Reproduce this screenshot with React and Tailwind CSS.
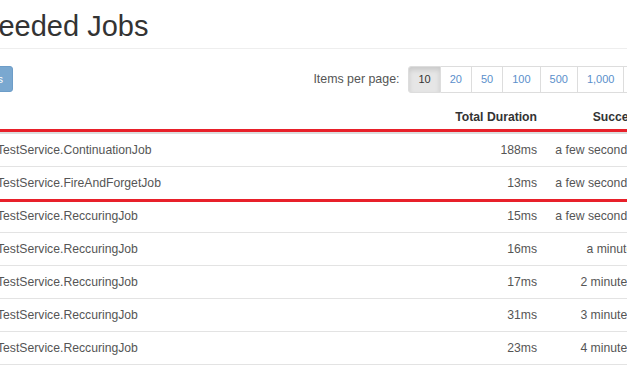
const rows = [
  { id: 101, job: "TestService.ContinuationJob", duration: "188ms", when: "a few seconds ago" },
  { id: 100, job: "TestService.FireAndForgetJob", duration: "13ms", when: "a few seconds ago" },
  { id: 99, job: "TestService.ReccuringJob", duration: "15ms", when: "a few seconds ago" },
  { id: 98, job: "TestService.ReccuringJob", duration: "16ms", when: "a minute ago" },
  { id: 97, job: "TestService.ReccuringJob", duration: "17ms", when: "2 minutes ago" },
  { id: 96, job: "TestService.ReccuringJob", duration: "31ms", when: "3 minutes ago" },
  { id: 95, job: "TestService.ReccuringJob", duration: "23ms", when: "4 minutes ago" },
];

const perPage = ["10", "20", "50", "100", "500", "1,000", "5,000"];

function Paginator() {
  return (
    <div className="flex h-[27px] text-[11px]">
      {perPage.map((n, i) => (
        <a
          key={n}
          href="#"
          className={
            "flex items-center px-[9px] border-y border-r border-[#ddd] " +
            (i === 0
              ? "border-l rounded-l-[3px] bg-[#e6e6e6] border-[#c4c4c4] text-[#333] shadow-[inset_0_3px_5px_rgba(0,0,0,0.125)]"
              : "bg-white text-[#5b8fcb]")
          }
        >
          {n}
        </a>
      ))}
    </div>
  );
}

export default function App() {
  return (
    <div className="relative w-[627px] h-[376px] overflow-hidden bg-white font-['Liberation_Sans',Arial,sans-serif]">
      <div className="-ml-[85px] w-[750px]">
        <h1 className="mt-[8px] pb-[4px] pl-[19px] border-b border-[#eee] text-[29px] leading-[36px] font-normal text-[#333]">
          Succeeded Jobs
        </h1>

        {/* toolbar */}
        <div className="mt-[17px] flex items-start justify-between">
          <button
            type="button"
            disabled
            className="flex items-center justify-end w-[98px] h-[26px] pr-[9px] rounded-[3px] bg-[#7aa8d0] border border-[#6d9dc8] text-white text-[11px]"
          >
            Requeue jobs
          </button>
          <div className="flex items-center gap-[9px] mr-[-6px]">
            <span className="text-[12.4px] text-[#555]">Items per page:</span>
            <Paginator />
          </div>
        </div>

        {/* table */}
        <div className="mt-[10px] text-[12.2px]">
          <div className="flex items-center h-[31px] border-b-2 border-[#ddd] font-bold text-[#333]">
            <div className="w-[82px]" />
            <div className="flex-1" />
            <div className="w-[100px] pr-2 text-right whitespace-nowrap">Total Duration</div>
            <div className="w-[120px] pr-2 text-right">Succeeded</div>
          </div>
          {rows.map((r) => (
            <div key={r.id} className="flex items-center h-[33px] border-b border-[#e3e3e3] text-[#555]">
              <div className="w-[82px]" />
              <div className="flex-1 whitespace-nowrap">{r.job}</div>
              <div className="w-[100px] pr-2 text-right">{r.duration}</div>
              <div className="w-[120px] pr-2 text-right whitespace-nowrap">{r.when}</div>
            </div>
          ))}
        </div>
      </div>

      {/* red highlight annotation */}
      <div className="absolute left-[-10px] right-[-20px] top-[129px] h-[73px] border-[3px] border-[#e8202a]" />
    </div>
  );
}
